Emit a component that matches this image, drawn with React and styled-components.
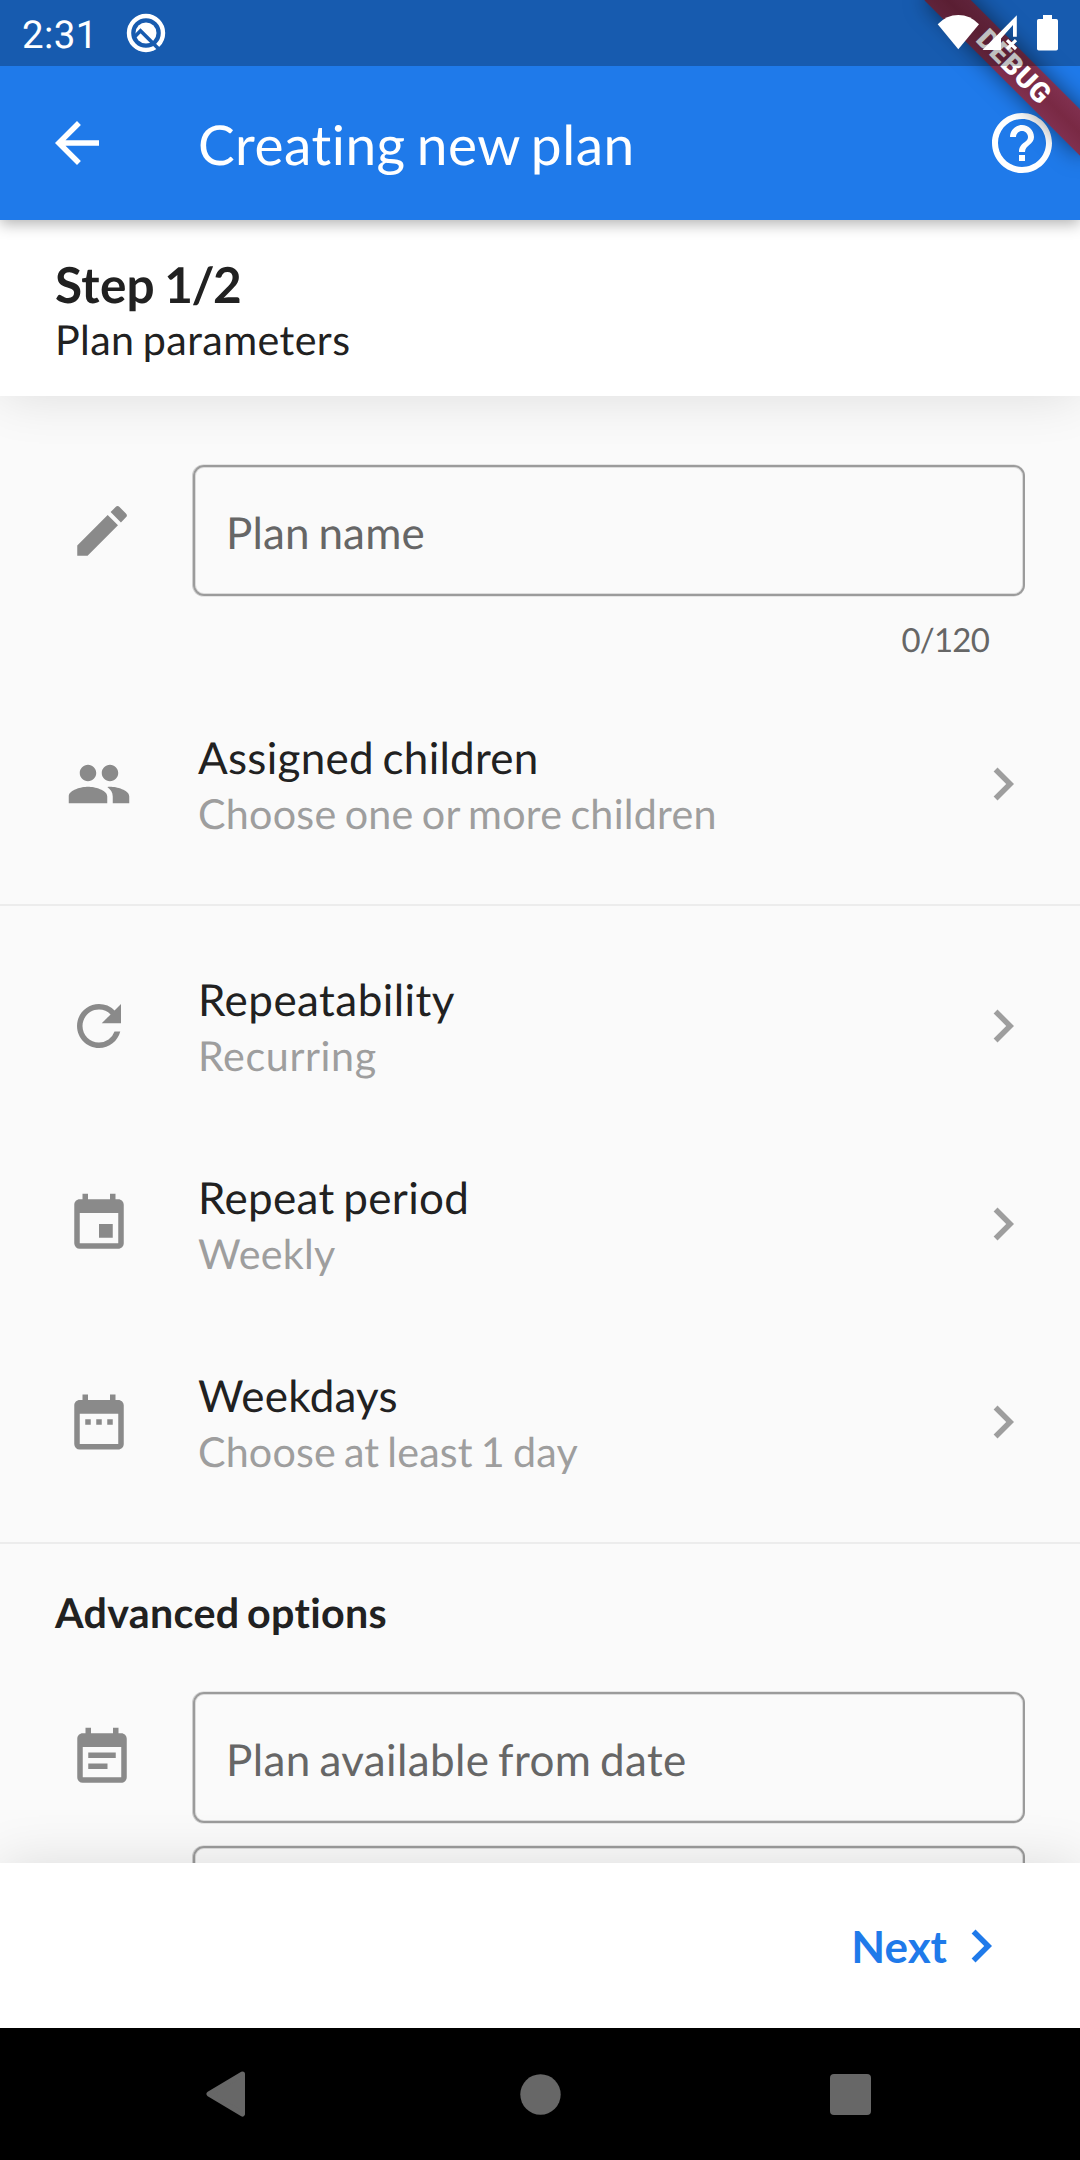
import React from "react";
import styled, { createGlobalStyle } from "styled-components";
import { MdArrowBack, MdHelpOutline, MdEdit, MdPeople, MdRefresh, MdEvent, MdDateRange, MdEventNote, MdChevronRight } from "react-icons/md";

const Global = createGlobalStyle`
  * { box-sizing: border-box; word-spacing: -0.064em; }
  body {
    margin: 0;
    background: #fafafa;
    color: #212121;
    font-family: Lato, "Open Sans", sans-serif;
    font-variant-ligatures: none;
    text-rendering: geometricPrecision;
  }
  svg { display: block; flex: none; }
`;

const Screen = styled.div`
  position: relative;
  width: 1080px;
  height: 2160px;
  overflow: hidden;
  display: flex;
  flex-direction: column;
  background: #fafafa;
`;

const StatusBar = styled.div`
  position: absolute;
  inset: 0 0 auto 0;
  height: 66px;
  display: flex;
  align-items: center;
  justify-content: space-between;
  padding: 0 22px;
  background: rgba(0, 0, 0, 0.25);
  z-index: 5;
`;

const StatusGroup = styled.div`
  display: flex;
  align-items: center;
`;

const Clock = styled.span`
  width: 104px;
  padding-top: 5px;
  font: 400 38.5px/64px Roboto, sans-serif;
  letter-spacing: 0.4px;
  color: #fff;
`;

const AppBar = styled.header`
  height: 220px;
  flex: none;
  display: flex;
  align-items: center;
  padding: 66px 22px 0 44px;
  background: #1f7aea;
  color: #fff;
  box-shadow: 0 4px 14px rgba(0, 0, 0, 0.3);
  z-index: 3;
`;

const Title = styled.h1`
  flex: 1;
  margin: 0 0 0 88px;
  padding-top: 1px;
  font-weight: 400;
  font-size: 55px;
  line-height: 66px;
  letter-spacing: 0.5px;
`;

const StepHeader = styled.section`
  height: 176px;
  flex: none;
  padding: 33px 55px;
  background: #fff;
  box-shadow: 0 0 50px rgba(0, 0, 0, 0.12);
  z-index: 2;
`;

const StepCount = styled.div`
  font-weight: 700;
  font-size: 49.5px;
  line-height: 62px;
  letter-spacing: 0.3px;
`;

const StepDigits = styled.span`
  letter-spacing: -1.5px;
`;

const StepName = styled.div`
  font-size: 41.25px;
  line-height: 48px;
  letter-spacing: 0.4px;
`;

const Content = styled.main`
  flex: 1;
  min-height: 0;
  overflow: hidden;
  padding-top: 69px;
`;

const FieldRow = styled.div`
  display: flex;
  align-items: center;
  height: 131px;
  margin-bottom: ${(p) => p.$gap || 0}px;
  padding: 0 55px 0 69px;
  color: #8a8a8a;
`;

const Field = styled.div`
  width: 832px;
  height: 131px;
  margin-left: auto;
  padding: 3px 0 0 31px;
  border: 2px solid #9b9b9b;
  border-radius: 11px;
  box-shadow: -0.5px 0 0 0.5px #cfcfcf, inset 0 0 0 1px #dcdcdc;
  color: #666;
  font-size: 44px;
  line-height: 126px;
  letter-spacing: ${(p) => p.$spacing || 0}px;
`;

const Counter = styled.div`
  height: 89px;
  padding: 24px 91px 0 0;
  text-align: right;
  font-size: 33px;
  line-height: 40px;
  letter-spacing: -0.8px;
  color: #666;
`;

const ListRow = styled.div`
  display: flex;
  align-items: center;
  height: 198px;
  padding: 0 44px 0 66px;
  color: #8a8a8a;
`;

const RowText = styled.div`
  flex: 1;
  margin-left: 66px;
  padding: 4px 0 1px;
`;

const RowTitle = styled.div`
  font-size: 44px;
  line-height: 55px;
  letter-spacing: ${(p) => p.$spacing}px;
  color: #212121;
`;

const RowValue = styled.div`
  font-size: 41.25px;
  line-height: 54px;
  letter-spacing: ${(p) => p.$spacing}px;
  color: #9e9e9e;
`;

const Chevron = styled(MdChevronRight)`
  color: #9e9e9e;
`;

const Section = styled.section`
  padding: ${(p) => p.$pad || "0"};
  border-bottom: 2px solid #ececec;
`;

const SectionTitle = styled.h2`
  margin: 0;
  height: 148px;
  padding: 42px 55px 0;
  font-weight: 700;
  font-size: 41.25px;
  line-height: 52px;
  letter-spacing: 0.3px;
`;

const Footer = styled.footer`
  height: 165px;
  flex: none;
  display: flex;
  align-items: center;
  justify-content: flex-end;
  padding-right: 66px;
  background: #fff;
  box-shadow: 0 0 50px rgba(0, 0, 0, 0.12);
  z-index: 2;
`;

const NextButton = styled.button`
  display: flex;
  align-items: center;
  gap: 1px;
  border: 0;
  padding: 0;
  background: none;
  color: #1f7aea;
  font: 700 44px/66px Lato, sans-serif;
`;

const NavBar = styled.nav`
  height: 132px;
  flex: none;
  display: flex;
  justify-content: space-between;
  align-items: center;
  padding: 0 209px 0 206px;
  background: #000;
  z-index: 3;
`;

const DebugRibbon = styled.div`
  position: absolute;
  left: 904px;
  top: 49.6px;
  width: 220px;
  height: 33px;
  transform: rotate(45deg);
  background: linear-gradient(#80304f, #792944 50%, #80304f);
  box-shadow: 0 0 22px rgba(0, 0, 0, 0.5);
  color: #fff;
  text-align: center;
  font: 900 28px/33px Roboto, sans-serif;
  letter-spacing: 0.5px;
  z-index: 4;
`;

const AndroidQ = () => (
  <svg width="40" height="40" viewBox="0 0 40 40">
    <mask id="q">
      <rect width="40" height="40" fill="#fff" />
      <path d="M7 25.5 14.5 17.8 35 38.3" fill="none" stroke="#000" strokeWidth="3.7" />
    </mask>
    <g mask="url(#q)">
      <circle cx="20" cy="20" r="17" fill="none" stroke="#fff" strokeWidth="4.4" />
      <circle cx="20" cy="20" r="10.5" fill="#fff" />
    </g>
  </svg>
);

const StatusIcons = () => (
  <svg width="122" height="40" viewBox="936 13 122 40" fill="#fff">
    <path d="M958.3 49.3 937.7 24.3Q946.5 15 958.3 15T979 24.3Z" />
    <path d="M982.5 50 1016.8 15.2V36.7H1013V25L1001 38.5V50Z" />
    <path d="m1007 40.2 9 8.8m0-8.8-9 8.8" stroke="#fff" strokeWidth="3.2" />
    <path d="M1043 15h9v4h4.2q1.8 0 1.8 1.8v28q0 1.8-1.8 1.8h-17.4q-1.8 0-1.8-1.8v-28q0-1.8 1.8-1.8H1043Z" />
  </svg>
);

const rows = [
  { icon: MdRefresh, title: "Repeatability", titleSpacing: 0.45, value: "Recurring", spacing: 0.6 },
  { icon: MdEvent, title: "Repeat period", value: "Weekly", spacing: 0.28 },
  { icon: MdDateRange, title: "Weekdays", titleSpacing: 0.22, value: "Choose at least 1 day", spacing: 0.15 },
];

const OptionRow = ({ icon: Icon, title, titleSpacing = 0.32, value, spacing }) => (
  <ListRow>
    <Icon size={66} />
    <RowText>
      <RowTitle $spacing={titleSpacing}>{title}</RowTitle>
      <RowValue $spacing={spacing}>{value}</RowValue>
    </RowText>
    <Chevron size={66} />
  </ListRow>
);

export default function App() {
  return (
    <Screen>
      <Global />
      <StatusBar>
        <StatusGroup>
          <Clock>2:31</Clock>
          <AndroidQ />
        </StatusGroup>
        <StatusIcons />
      </StatusBar>
      <AppBar>
        <MdArrowBack size={66} />
        <Title>Creating new plan</Title>
        <MdHelpOutline size={72} />
      </AppBar>
      <StepHeader>
        <StepCount>
          Step <StepDigits>1/2</StepDigits>
        </StepCount>
        <StepName>Plan parameters</StepName>
      </StepHeader>
      <Content>
        <Section $pad="0 0 21px">
          <FieldRow>
            <MdEdit size={66} />
            <Field $spacing={0.17}>Plan name</Field>
          </FieldRow>
          <Counter>0/120</Counter>
          <OptionRow icon={MdPeople} title="Assigned children" titleSpacing={0.26} value="Choose one or more children" spacing={0.25} />
        </Section>
        <Section $pad="21px 0">
          {rows.map((row) => (
            <OptionRow key={row.title} {...row} />
          ))}
        </Section>
        <SectionTitle>Advanced options</SectionTitle>
        <FieldRow $gap={23}>
          <MdEventNote size={66} />
          <Field $spacing={0.37}>Plan available from date</Field>
        </FieldRow>
        <FieldRow>
          <Field />
        </FieldRow>
      </Content>
      <Footer>
        <NextButton>
          Next
          <MdChevronRight size={66} />
        </NextButton>
      </Footer>
      <NavBar>
        <svg width="44" height="46" viewBox="0 0 44 46">
          <path d="M36.5 3 3 23l33.5 20z" fill="#676767" stroke="#676767" strokeWidth="5" strokeLinejoin="round" />
        </svg>
        <svg width="41" height="41" viewBox="0 0 41 41">
          <circle cx="20.5" cy="20.5" r="20.2" fill="#676767" />
        </svg>
        <svg width="41" height="41" viewBox="0 0 41 41">
          <rect width="41" height="41" rx="4" fill="#676767" />
        </svg>
      </NavBar>
      <DebugRibbon>DEBUG</DebugRibbon>
    </Screen>
  );
}
